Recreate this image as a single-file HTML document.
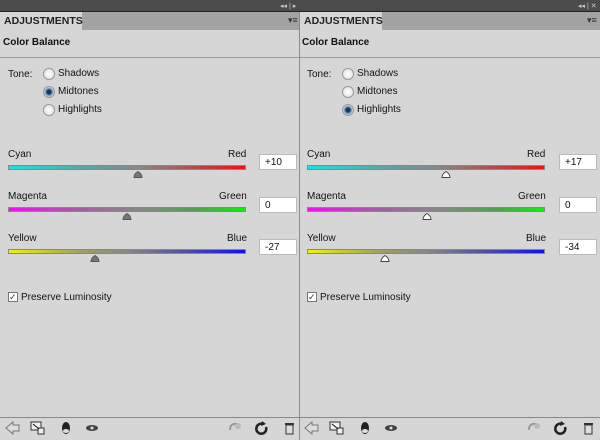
<!DOCTYPE html><html><head><style>
*{margin:0;padding:0;box-sizing:border-box}
body{width:600px;height:440px;background:#d6d6d6;position:relative;overflow:hidden;font-family:"Liberation Sans",Arial,sans-serif;font-size:10px;color:#111}
.a{position:absolute}
.top{left:0;top:0;width:600px;height:12px;background:#4b4b4b;border-bottom:1px solid #222}
.tabbar{top:12px;height:18px;background:#a3a3a3}
.tab{top:12px;height:18px;background:#d6d6d6;font-weight:bold;font-size:10.5px;padding:3px 0 0 4px;color:#222}
.t{font-size:10px}
.b{font-weight:bold;font-size:10px}
.bar{height:5px;border:1px solid #888}
.inp{width:38px;height:16px;background:#fff;border:1px solid #bbb;padding:2px 0 0 5px;font-size:10px}
.rad{width:12px;height:12px;border-radius:50%;border:1px solid #999;background:radial-gradient(#fff,#ddd)}
.rad.on{background:radial-gradient(#235 0 2px,#4a8ab5 3px,#dde 5px)}
.thumb{width:10px;height:7px}
.line{height:1px;background:#999}
</style></head><body>
<div class="a top"></div>
<div class="a" style="left:280px;top:2px;color:#ccc;font-size:7px">◂◂ | ▸</div>
<div class="a" style="left:578px;top:2px;color:#ccc;font-size:7px">◂◂ | ✕</div>
<div class="a tabbar" style="left:0;width:299px"></div>
<div class="a tabbar" style="left:300px;width:300px"></div>
<div class="a" style="left:299px;top:12px;width:1px;height:428px;background:#8a8a8a"></div>
<div class="a tab" style="left:0;width:82px">ADJUSTMENTS</div>
<div class="a tab" style="left:300px;width:82px">ADJUSTMENTS</div>
<div class="a" style="left:288px;top:15px;font-size:9px;color:#333">▾≡</div>
<div class="a" style="left:587px;top:15px;font-size:9px;color:#333">▾≡</div>

<!-- left panel -->
<div class="a b" style="left:3px;top:37px">Color Balance</div>
<div class="a line" style="left:0;top:57px;width:299px"></div>
<div class="a t" style="left:8px;top:69px">Tone:</div>
<div class="a rad" style="left:43px;top:68px"></div><div class="a t" style="left:58px;top:68px">Shadows</div>
<div class="a rad on" style="left:43px;top:86px"></div><div class="a t" style="left:58px;top:86px">Midtones</div>
<div class="a rad" style="left:43px;top:104px"></div><div class="a t" style="left:58px;top:104px">Highlights</div>

<div class="a t" style="left:8px;top:149px">Cyan</div><div class="a t" style="left:228px;top:149px">Red</div>
<div class="a bar" style="left:8px;top:165px;width:238px;background:linear-gradient(90deg,#1ee0e0,#5aa6a6 30%,#888 55%,#b04a4a 80%,#f01010)"></div>
<div class="a inp" style="left:259px;top:154px">+10</div>
<svg class="a thumb" style="left:133px;top:171px" viewBox="0 0 10 7"><path d="M1 6.5 Q1 3 5 0.5 Q9 3 9 6.5Z" fill="#777" stroke="#555"/></svg>

<div class="a t" style="left:8px;top:191px">Magenta</div><div class="a t" style="left:219px;top:191px">Green</div>
<div class="a bar" style="left:8px;top:207px;width:238px;background:linear-gradient(90deg,#f010f0,#a060a0 30%,#888 55%,#50a050 80%,#10f010)"></div>
<div class="a inp" style="left:259px;top:197px">0</div>
<svg class="a thumb" style="left:122px;top:213px" viewBox="0 0 10 7"><path d="M1 6.5 Q1 3 5 0.5 Q9 3 9 6.5Z" fill="#777" stroke="#555"/></svg>

<div class="a t" style="left:8px;top:233px">Yellow</div><div class="a t" style="left:227px;top:233px">Blue</div>
<div class="a bar" style="left:8px;top:249px;width:238px;background:linear-gradient(90deg,#f0f010,#a0a060 30%,#888 50%,#5050a0 75%,#1010f0)"></div>
<div class="a inp" style="left:259px;top:239px">-27</div>
<svg class="a thumb" style="left:90px;top:255px" viewBox="0 0 10 7"><path d="M1 6.5 Q1 3 5 0.5 Q9 3 9 6.5Z" fill="#777" stroke="#555"/></svg>

<div class="a" style="left:8px;top:292px;width:10px;height:10px;border:1px solid #777;background:#fff;font-size:9px;line-height:8px;color:#333">✓</div>
<div class="a t" style="left:21px;top:292px">Preserve Luminosity</div>

<!-- right panel -->
<div class="a b" style="left:302px;top:37px">Color Balance</div>
<div class="a line" style="left:300px;top:57px;width:300px"></div>
<div class="a t" style="left:307px;top:69px">Tone:</div>
<div class="a rad" style="left:342px;top:68px"></div><div class="a t" style="left:357px;top:68px">Shadows</div>
<div class="a rad" style="left:342px;top:86px"></div><div class="a t" style="left:357px;top:86px">Midtones</div>
<div class="a rad on" style="left:342px;top:104px"></div><div class="a t" style="left:357px;top:104px">Highlights</div>

<div class="a t" style="left:307px;top:149px">Cyan</div><div class="a t" style="left:527px;top:149px">Red</div>
<div class="a bar" style="left:307px;top:165px;width:238px;background:linear-gradient(90deg,#1ee0e0,#5aa6a6 30%,#888 55%,#b04a4a 80%,#f01010)"></div>
<div class="a inp" style="left:559px;top:154px">+17</div>
<svg class="a thumb" style="left:441px;top:171px" viewBox="0 0 10 7"><path d="M1 6.5 Q1 3 5 0.5 Q9 3 9 6.5Z" fill="#fff" stroke="#444"/></svg>

<div class="a t" style="left:307px;top:191px">Magenta</div><div class="a t" style="left:518px;top:191px">Green</div>
<div class="a bar" style="left:307px;top:207px;width:238px;background:linear-gradient(90deg,#f010f0,#a060a0 30%,#888 55%,#50a050 80%,#10f010)"></div>
<div class="a inp" style="left:559px;top:197px">0</div>
<svg class="a thumb" style="left:422px;top:213px" viewBox="0 0 10 7"><path d="M1 6.5 Q1 3 5 0.5 Q9 3 9 6.5Z" fill="#fff" stroke="#444"/></svg>

<div class="a t" style="left:307px;top:233px">Yellow</div><div class="a t" style="left:526px;top:233px">Blue</div>
<div class="a bar" style="left:307px;top:249px;width:238px;background:linear-gradient(90deg,#f0f010,#a0a060 30%,#888 50%,#5050a0 75%,#1010f0)"></div>
<div class="a inp" style="left:559px;top:239px">-34</div>
<svg class="a thumb" style="left:380px;top:255px" viewBox="0 0 10 7"><path d="M1 6.5 Q1 3 5 0.5 Q9 3 9 6.5Z" fill="#fff" stroke="#444"/></svg>

<div class="a" style="left:307px;top:292px;width:10px;height:10px;border:1px solid #777;background:#fff;font-size:9px;line-height:8px;color:#333">✓</div>
<div class="a t" style="left:320px;top:292px">Preserve Luminosity</div>

<!-- bottom -->
<div class="a line" style="left:0;top:417px;width:600px;background:#888"></div>
<svg class="a" style="left:0;top:418px" width="600" height="22">
<g id="bi">
<path d="M6 10 L13 4 L13 7 L19 7 L19 13 L13 13 L13 16Z" fill="#ddd" stroke="#777"/>
<rect x="31" y="4" width="10" height="8" fill="#eee" stroke="#333"/><rect x="38" y="10" width="6" height="6" fill="#eee" stroke="#333"/><path d="M33 6 L39 11" stroke="#111"/>
<ellipse cx="66" cy="10" rx="4" ry="6" fill="#222"/><ellipse cx="66" cy="13" rx="3" ry="2" fill="#ddd"/>
<ellipse cx="92" cy="10" rx="6" ry="3" fill="#444"/><circle cx="92" cy="10" r="1.5" fill="#ddd"/>
<path d="M230 12 Q230 5 237 6" stroke="#999" fill="none" stroke-width="2"/><circle cx="238" cy="8" r="3" fill="#bbb"/>
<path d="M263 6 A5 5 0 1 0 266 9" stroke="#222" fill="none" stroke-width="2.5"/><path d="M262 3 L266 6 L261 8Z" fill="#222"/>
<rect x="286" y="7" width="7" height="9" fill="#ddd" stroke="#333"/><rect x="285" y="5" width="9" height="2" fill="#333"/>
</g>
<use href="#bi" x="299"/>
</svg>
</body></html>
